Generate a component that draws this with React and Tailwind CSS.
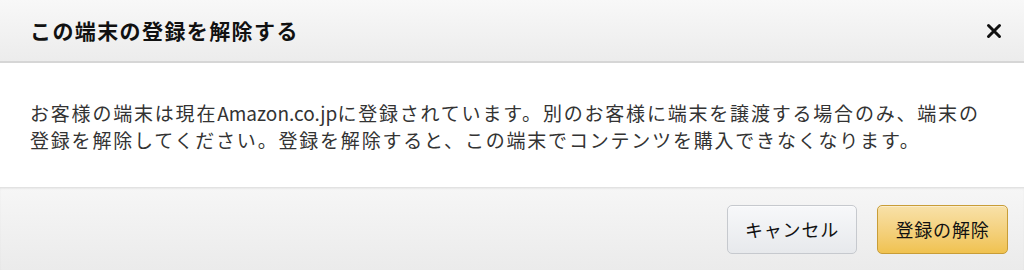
export default function App() {
  return (
    <div
      className="w-[1024px] h-[270px] flex flex-col bg-white overflow-hidden"
      style={{ fontFamily: '"Noto Sans CJK JP", "Noto Sans", sans-serif' }}
    >
      {/* header */}
      <div className="h-[63px] flex items-center justify-between pl-[30px] pr-[20px] bg-gradient-to-b from-[#f8f8f8] to-[#ececec] border-b-2 border-[#d6d6d6]">
        <h1 className="text-[21px] font-bold text-[#111] tracking-[1.4px] leading-none">この端末の登録を解除する</h1>
        <button className="w-[20px] h-[20px] flex items-center justify-center">
          <svg width="16" height="16" viewBox="0 0 16 16">
            <path d="M2.5 2.5 L13.5 13.5 M13.5 2.5 L2.5 13.5" stroke="#111" strokeWidth="3" strokeLinecap="round" />
          </svg>
        </button>
      </div>

      {/* body */}
      <div className="h-[124px] pl-[30px] pt-[36px]">
        <p className="text-[19px] leading-[27px] text-[#333] tracking-[1.8px]">
          お客様の端末は現在<span className="tracking-normal">Amazon.co.jp</span>に登録されています。別のお客様に端末を譲渡する場合のみ、端末の
          <br />
          登録を解除してください。登録を解除すると、この端末でコンテンツを購入できなくなります。
        </p>
      </div>

      {/* footer */}
      <div className="flex-1 flex items-center justify-end gap-[20px] pr-[16px] bg-gradient-to-b from-[#f6f6f6] to-[#ebebeb] border-t border-[#e2e2e2] shadow-[inset_0_1px_2px_rgba(0,0,0,0.06)]">
        <button className="w-[130px] h-[49px] rounded-[5px] border border-[#c6c9ce] bg-gradient-to-b from-[#f7f8fa] to-[#e7e9ec] text-[18px] text-[#111] tracking-[0.8px] shadow-[inset_0_1px_0_rgba(255,255,255,0.6)]">
          キャンセル
        </button>
        <button className="w-[131px] h-[49px] rounded-[5px] border border-[#c89d37] bg-gradient-to-b from-[#f8e1a8] to-[#f0c24f] text-[18px] text-[#111] tracking-[0.8px] shadow-[inset_0_1px_0_rgba(255,255,255,0.4)]">
          登録の解除
        </button>
      </div>
    </div>
  )
}
